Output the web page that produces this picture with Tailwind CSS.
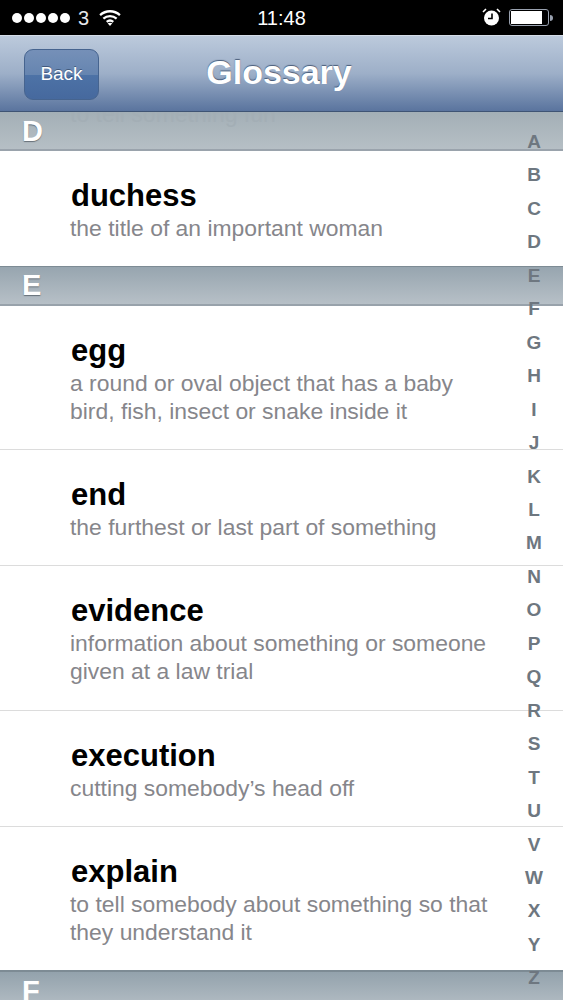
<!DOCTYPE html>
<html lang="en">

<head>
    <meta charset="UTF-8">
    <meta name="viewport" content="width=device-width, initial-scale=1.0">
    <title>Glossary</title>
    <script src="https://cdn.jsdelivr.net/npm/@tailwindcss/browser@4"></script>
</head>

<body class="bg-white">
    <div class="relative w-[563px] h-[1000px] overflow-hidden bg-white font-['Liberation_Sans',Arial,sans-serif]">

        <!-- status bar -->
        <div class="h-[35px] bg-black text-white flex items-center justify-between pl-[12px] pr-[10px] relative">
            <div class="flex items-center">
                <div class="flex gap-[2px]">
                    <span class="w-[10px] h-[10px] rounded-full bg-white"></span>
                    <span class="w-[10px] h-[10px] rounded-full bg-white"></span>
                    <span class="w-[10px] h-[10px] rounded-full bg-white"></span>
                    <span class="w-[10px] h-[10px] rounded-full bg-white"></span>
                    <span class="w-[10px] h-[10px] rounded-full bg-white"></span>
                </div>
                <span class="ml-[8px] text-[20px] font-light leading-none text-gray-200">3</span>
                <svg class="ml-[10px]" width="22" height="17" viewBox="0 0 23 18" fill="none" stroke="white" stroke-width="2.4">
                    <path d="M1 6.5C7 1 16 1 22 6.5" />
                    <path d="M4.5 10.2C8.5 6.6 14.5 6.6 18.5 10.2" />
                    <path d="M8 13.6C10 12 13 12 15 13.6" />
                    <path d="M11.5 18L9 15.2C10.5 14.2 12.5 14.2 14 15.2Z" fill="white" stroke="none" />
                </svg>
            </div>
            <div class="absolute left-0 right-0 text-center text-[20px] font-medium leading-none">11:48</div>
            <div class="flex items-center">
                <svg width="19" height="19" viewBox="0 0 19 19">
                    <circle cx="9.5" cy="10" r="7.5" fill="white" />
                    <path d="M10 5.5V10.5H6" fill="none" stroke="black" stroke-width="1.6" />
                    <path d="M1 4L4 1M18 4L15 1" stroke="white" stroke-width="1.6" />
                </svg>
                <div class="ml-[8px] w-[40px] h-[17px] border border-gray-400 rounded-[3px] p-[1px]">
                    <div class="w-[31px] h-full bg-white"></div>
                </div>
                <div class="w-[3px] h-[6px] bg-gray-400 rounded-r-sm ml-[1px]"></div>
            </div>
        </div>

        <!-- nav bar -->
        <div class="relative z-20 h-[77px] flex items-center justify-center pr-[5px] border-t border-t-[#d5dde8] border-b border-b-[#3f5474] bg-gradient-to-b from-[#bccadc] via-[#9dafc8] to-[#5a749e]">
            <div class="absolute left-[24px] top-[13px] w-[75px] h-[51px] rounded-[9px] border border-[#46648f] bg-[linear-gradient(#7590b8,#6685b0_50%,#4d72a6_52%,#46699e)] flex items-center justify-center text-white text-[19px] [text-shadow:0_-1px_0_rgba(40,60,90,0.6)]">Back</div>
            <h1 class="mb-[3px] text-[34px] font-bold text-white leading-none [text-shadow:0_-1px_1px_rgba(50,70,100,0.8)]">Glossary</h1>
        </div>

        <!-- section D -->
        <div class="relative h-[39px] overflow-hidden border-b-2 border-b-[#9aa3ac] bg-gradient-to-b from-[#a3afb6] to-[#b6bfc5] pl-[22px] text-white font-bold text-[29px] leading-[38px] [text-shadow:0_1px_1px_rgba(70,80,90,0.7)]">
            D
            <span class="absolute left-[70px] top-[-17px] text-[23px] font-normal text-[#a3aeb5] [text-shadow:none]">to tell something fun</span>
        </div>
        <div class="h-[115px] pl-[71px] pr-[69px] pt-[29px]">
            <p class="text-[31px] font-bold text-black leading-[32px]">duchess</p>
            <p class="-ml-[1px] mt-[2px] text-[22.9px] text-[#86868b] leading-[28px]">the title of an important woman</p>
        </div>

        <!-- section E -->
        <div class="h-[40px] border-t border-t-[#7d8b94] border-b-2 border-b-[#98a2ab] bg-gradient-to-b from-[#97a5af] to-[#b7c0c7] pl-[22px] text-white font-bold text-[29px] leading-[37px] [text-shadow:0_1px_1px_rgba(70,80,90,0.7)]">E</div>
        <div class="h-[144px] pl-[71px] pr-[69px] pt-[29px] border-b border-b-[#dcdcdc]">
            <p class="text-[31px] font-bold text-black leading-[32px]">egg</p>
            <p class="-ml-[1px] mt-[2px] text-[22.9px] text-[#86868b] leading-[28px]">a round or oval object that has a baby bird, fish, insect or snake inside it</p>
        </div>
        <div class="h-[116px] pl-[71px] pr-[69px] pt-[29px] border-b border-b-[#dcdcdc]">
            <p class="text-[31px] font-bold text-black leading-[32px]">end</p>
            <p class="-ml-[1px] mt-[2px] text-[22.9px] text-[#86868b] leading-[28px]">the furthest or last part of something</p>
        </div>
        <div class="h-[145px] pl-[71px] pr-[69px] pt-[29px] border-b border-b-[#dcdcdc]">
            <p class="text-[31px] font-bold text-black leading-[32px]">evidence</p>
            <p class="-ml-[1px] mt-[2px] text-[22.9px] text-[#86868b] leading-[28px]">information about something or someone given at a law trial</p>
        </div>
        <div class="h-[116px] pl-[71px] pr-[69px] pt-[29px] border-b border-b-[#dcdcdc]">
            <p class="text-[31px] font-bold text-black leading-[32px]">execution</p>
            <p class="-ml-[1px] mt-[2px] text-[22.9px] text-[#86868b] leading-[28px]">cutting somebody’s head off</p>
        </div>
        <div class="h-[143px] pl-[71px] pr-[69px] pt-[29px]">
            <p class="text-[31px] font-bold text-black leading-[32px]">explain</p>
            <p class="-ml-[1px] mt-[2px] text-[22.9px] text-[#86868b] leading-[28px]">to tell somebody about something so that they understand it</p>
        </div>

        <!-- section F -->
        <div class="h-[40px] border-t-2 border-t-[#7d8b94] bg-gradient-to-b from-[#93a2ac] to-[#b7c0c7] pl-[22px] text-white font-bold text-[29px] leading-[39px]">F</div>

        <!-- alphabet index -->
        <div class="absolute z-10 top-[125px] right-[9px] w-[40px] h-[870px] flex flex-col items-center justify-between text-[19px] font-bold leading-[33.4px] text-[#6e7780]">
            <span>A</span><span>B</span><span>C</span><span>D</span><span>E</span><span>F</span><span>G</span><span>H</span><span>I</span><span>J</span><span>K</span><span>L</span><span>M</span><span>N</span><span>O</span><span>P</span><span>Q</span><span>R</span><span>S</span><span>T</span><span>U</span><span>V</span><span>W</span><span>X</span><span>Y</span><span>Z</span>
        </div>
    </div>
</body>

</html>
